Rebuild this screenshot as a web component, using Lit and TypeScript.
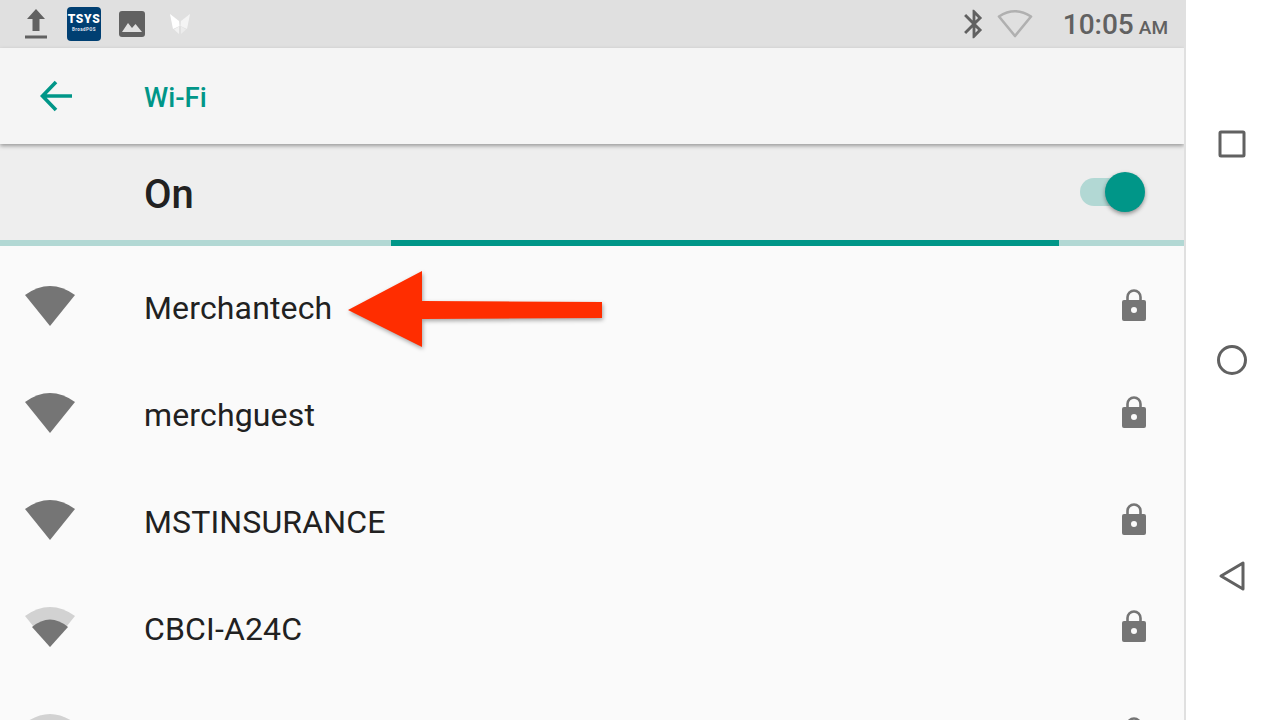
import { LitElement, html, css, svg } from 'lit';
import { customElement } from 'lit/decorators.js';

interface Network {
  name: string;
  weak?: boolean;
}

const NETWORKS: Network[] = [
  { name: 'Merchantech' },
  { name: 'merchguest' },
  { name: 'MSTINSURANCE' },
  { name: 'CBCI-A24C', weak: true },
  { name: '', weak: true },
];

const OUTER_WEDGE = 'M25 9 Q50 -9 75 9 L50 40 Z';

@customElement('app-root')
export class AppRoot extends LitElement {
  static styles = css`
    :host {
      display: block;
      width: 1280px;
      height: 720px;
      overflow: hidden;
      position: relative;
      background: #fff;
      font-family: Roboto, 'Liberation Sans', sans-serif;
    }

    .screen {
      display: flex;
      width: 1280px;
      height: 720px;
    }

    .main {
      width: 1186px;
      height: 720px;
      flex: none;
      display: flex;
      flex-direction: column;
      overflow: hidden;
      background: #fafafa;
      border-right: 2px solid #e0e0e0;
      box-sizing: border-box;
    }

    .status {
      flex: none;
      height: 48px;
      width: 1186px;
      background: #e0e0e0;
      display: flex;
      align-items: center;
      box-sizing: border-box;
      padding: 0 18px 0 25px;
    }

    .status svg {
      display: block;
      flex: none;
    }

    .upload {
      margin-right: 20px;
    }

    .logo {
      width: 34px;
      height: 34px;
      flex: none;
      margin-right: 18px;
      border-radius: 4px;
      background: #003f72;
      color: #fff;
      display: flex;
      flex-direction: column;
      align-items: center;
      font-weight: 900;
      padding-top: 5px;
      box-sizing: border-box;
    }

    .logo .brand {
      font-size: 12px;
      line-height: 14px;
      letter-spacing: 0.7px;
    }

    .logo .sub {
      font-size: 4.500px;
      line-height: 7px;
      letter-spacing: 0.4px;
      color: #cfd8e3;
    }

    .picture {
      margin-right: 25px;
    }

    .spacer {
      flex: 1;
    }

    .bluetooth {
      margin-right: 6px;
    }

    .wifi-outline {
      margin-right: 30px;
    }

    .clock {
      color: #616161;
      font-size: 28px;
      font-weight: 500;
      line-height: 48px;
      white-space: nowrap;
      margin-top: 4px;
    }

    .clock small {
      font-size: 19px;
      margin-left: 5px;
    }

    .toolbar {
      flex: none;
      width: 1184px;
      height: 96px;
      background: #f5f5f5;
      display: flex;
      align-items: center;
      box-shadow: 0 2px 4px rgba(0, 0, 0, 0.35);
      position: relative;
      z-index: 1;
    }

    .back {
      display: block;
      margin-left: 40px;
      margin-right: 72px;
    }

    .title {
      color: #009688;
      font-size: 27.500px;
      font-weight: 500;
      margin-top: 3px;
    }

    .switch-bar {
      flex: none;
      width: 1184px;
      height: 96px;
      background: #eeeeee;
      display: flex;
      align-items: center;
      justify-content: space-between;
      box-sizing: border-box;
      padding: 0 39px 0 144px;
    }

    .switch-label {
      color: #212121;
      font-size: 40px;
      font-weight: 500;
      margin-top: 5px;
    }

    .switch {
      width: 65px;
      height: 28px;
      position: relative;
    }

    .track {
      width: 60px;
      height: 28px;
      border-radius: 14px;
      background: #b2d8d4;
    }

    .thumb {
      position: absolute;
      left: 25px;
      top: -6px;
      width: 40px;
      height: 40px;
      border-radius: 50%;
      background: #009688;
      box-shadow: 0 2px 4px rgba(0, 0, 0, 0.4);
    }

    .progress {
      flex: none;
      width: 1184px;
      height: 6px;
      background: #b2d8d4;
    }

    .progress div {
      height: 6px;
      background: #009688;
      margin-left: 391px;
      width: 668px;
    }

    .list {
      width: 1184px;
      padding-top: 8px;
    }

    .row {
      height: 107px;
      display: flex;
      align-items: center;
      box-sizing: border-box;
      padding-left: 25px;
      padding-right: 38px;
    }

    .row svg {
      display: block;
      flex: none;
    }

    .signal {
      margin-top: -3px;
      margin-right: 69px;
    }

    .name {
      flex: 1;
      color: #212121;
      font-size: 32px;
      letter-spacing: 0.15px;
    }

    .lock {
      margin-top: -5px;
    }

    .nav {
      flex: 1;
      display: grid;
      grid-template-rows: repeat(3, 216px);
      padding: 36px 2px 36px 0;
      justify-items: center;
      align-items: center;
    }

    .nav svg {
      display: block;
    }

    .annotation {
      position: absolute;
      left: 340px;
      top: 262px;
      filter: drop-shadow(1px 2px 2px rgba(0, 0, 0, 0.35));
    }
  `;

  private signal(weak?: boolean) {
    return html`<svg class="signal" width="50" height="40" viewBox="25 0 50 40">
      ${weak
        ? svg`<path d=${OUTER_WEDGE} fill="#d2d2d2"/>
            <path d="M32 20 Q50 5 68 20 L50 40 Z" fill="#757575"/>`
        : svg`<path d=${OUTER_WEDGE} fill="#757575"/>`}
    </svg>`;
  }

  private lock() {
    return html`<svg class="lock" width="24" height="32" viewBox="0 0 24 32">
      <path d="M5.500 12V8a6.500 6.500 0 0 1 13 0v4" fill="none" stroke="#757575" stroke-width="2.600"/>
      <path
        fill="#757575"
        fill-rule="evenodd"
        d="M2 11h20a2 2 0 0 1 2 2v17a2 2 0 0 1-2 2H2a2 2 0 0 1-2-2V13a2 2 0 0 1 2-2zM12 18a3 3 0 1 0 0 6 3 3 0 0 0 0-6z"
      />
    </svg>`;
  }

  render() {
    return html`
      <div class="screen">
        <div class="main">
          <div class="status">
            <svg class="upload" width="22" height="32" viewBox="0 0 22 32">
              <path d="M11 1 20 11H14.500V23H7.500V11H2Z" fill="#616161"/>
              <rect y="27.500" width="22" height="3" fill="#616161"/>
            </svg>
            <div class="logo">
              <span class="brand">TSYS</span>
              <span class="sub">BroadPOS</span>
            </div>
            <svg class="picture" width="26" height="26" viewBox="0 0 26 26">
              <rect width="26" height="26" rx="3" fill="#616161"/>
              <path d="M3 21 9 12 13 17 16.500 13 23 21Z" fill="#e0e0e0"/>
            </svg>
            <svg width="20" height="20" viewBox="0 0 20 20">
              <path d="M0 0 9 7 9.500 12 3 15Z" fill="#fff"/>
              <path d="M20 0 11 7 10.500 12 17 15Z" fill="#f4f4f4"/>
              <path d="M9 12.500 4 15.500 9 20Z" fill="#f2f2f2"/>
              <path d="M11 12.500 16 15.500 11 20Z" fill="#ececec"/>
            </svg>
            <div class="spacer"></div>
            <svg class="bluetooth" width="34" height="34" viewBox="0 0 24 24">
              <path
                fill="#616161"
                d="M17.710 7.710L12 2h-1v7.590L6.410 5 5 6.410 10.590 12 5 17.590 6.410 19 11 14.410V22h1l5.710-5.710-4.300-4.290 4.300-4.290zM13 5.830l1.880 1.880L13 9.590V5.830zm1.880 10.460L13 18.170v-3.760l1.880 1.880z"
              />
            </svg>
            <svg class="wifi-outline" width="36" height="30" viewBox="0 0 36 30">
              <path d="M2 7.500Q18 -3 34 7.500L18 27Z" fill="none" stroke="#b0b0b0" stroke-width="2.600" stroke-linejoin="round"/>
            </svg>
            <div class="clock">10:05<small>AM</small></div>
          </div>

          <div class="toolbar">
            <svg class="back" width="32" height="32" viewBox="0 0 32 32">
              <path d="M32 16H3M16 2 2.500 16 16 30" fill="none" stroke="#009688" stroke-width="3.600"/>
            </svg>
            <span class="title">Wi-Fi</span>
          </div>

          <div class="switch-bar">
            <span class="switch-label">On</span>
            <div class="switch">
              <div class="track"></div>
              <div class="thumb"></div>
            </div>
          </div>

          <div class="progress"><div></div></div>

          <div class="list">
            ${NETWORKS.map(
              (n) => html`<div class="row">
                ${this.signal(n.weak)}
                <span class="name">${n.name}</span>
                ${this.lock()}
              </div>`
            )}
          </div>
        </div>

        <div class="nav">
          <svg width="28" height="28" viewBox="0 0 28 28">
            <rect x="2" y="2" width="24" height="24" rx="1" fill="none" stroke="#616161" stroke-width="3"/>
          </svg>
          <svg width="32" height="32" viewBox="0 0 32 32">
            <circle cx="16" cy="16" r="13.500" fill="none" stroke="#616161" stroke-width="3"/>
          </svg>
          <svg width="28" height="32" viewBox="0 0 28 32">
            <path d="M3 16 25 3V29Z" fill="none" stroke="#616161" stroke-width="3" stroke-linejoin="round"/>
          </svg>
        </div>
      </div>

      <svg class="annotation" width="270" height="92" viewBox="340 262 270 92">
        <path d="M348 310 422 271V301L602 302V318L422 319V347Z" fill="#ff2d00"/>
      </svg>
    `;
  }
}

declare global {
  interface HTMLElementTagNameMap {
    'app-root': AppRoot;
  }
}
